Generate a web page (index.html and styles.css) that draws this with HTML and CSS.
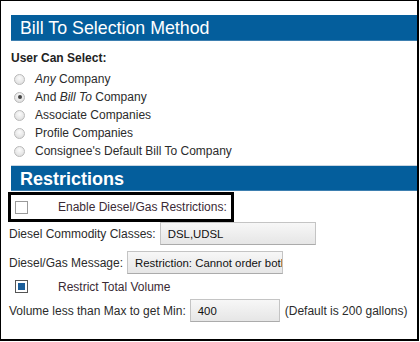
FILE: index.html
```html
<!DOCTYPE html>
<html lang="en">
<head>
  <meta charset="UTF-8" />
  <title>Bill To Selection Method</title>
  <link rel="stylesheet" href="styles.css">
</head>
<body>
  <div class="frame">
    <h2 class="section-bar">Bill To Selection Method</h2>
    <div class="select-title">User Can Select:</div>
    <ul class="options">
      <li><span class="radio"></span><em>Any</em>&nbsp;Company</li>
      <li><span class="radio checked"></span>And&nbsp;<em>Bill To</em>&nbsp;Company</li>
      <li><span class="radio"></span>Associate Companies</li>
      <li><span class="radio"></span>Profile Companies</li>
      <li><span class="radio"></span>Consignee's Default Bill To Company</li>
    </ul>

    <h2 class="section-bar bold">Restrictions</h2>
    <div class="highlight">
      <span class="check"></span>
      <span class="check-label">Enable Diesel/Gas Restrictions:</span>
    </div>
    <div class="field-row first">
      <label>Diesel Commodity Classes:</label>
      <div class="input wide">DSL,UDSL</div>
    </div>
    <div class="field-row">
      <label>Diesel/Gas Message:</label>
      <div class="input msg">Restriction: Cannot order both</div>
    </div>
    <div class="check-row">
      <span class="check on"></span>
      <span class="check-label">Restrict Total Volume</span>
    </div>
    <div class="field-row last">
      <label>Volume less than Max to get Min:</label>
      <div class="input small">400</div>
      <span class="note">(Default is 200 gallons)</span>
    </div>
  </div>
</body>
</html>
```
FILE: styles.css
```css
:root {
  --bar: #045e9c;
  --text: #2b2b2b;
}
html, body {
  margin: 0;
  padding: 0;
  background: #fff;
}
body {
  font-family: 'Liberation Sans', Arial, sans-serif;
  font-size: 12px;
  color: var(--text);
}

.frame {
  width: 419px;
  height: 341px;
  box-sizing: border-box;
  border: 1px solid #000;
  border-right-width: 2px;
  border-bottom-width: 2px;
  padding: 14px 0 0 10px;
  overflow: hidden;
}

/* Blue section bars */
.section-bar {
  margin: 0;
  height: 26px;
  line-height: 27px;
  padding-left: 9px;
  background: var(--bar);
  border-bottom: 1px solid #3d7fb0;
  box-sizing: border-box;
  color: #fff;
  font-size: 17.8px;
  font-weight: normal;
}
.section-bar.bold {
  margin-top: 5px;
  border-top: 1px solid #c9d6e2;
  font-weight: bold;
  font-size: 18px;
}

.select-title {
  margin-top: 10px;
  font-weight: bold;
  color: #222;
}

/* Radio list */
.options {
  list-style: none;
  margin: 5px 0 0;
  padding: 0;
}
.options li {
  display: flex;
  align-items: center;
  height: 18px;
}
.options em {
  font-style: italic;
}
.radio {
  width: 11px;
  height: 11px;
  border-radius: 50%;
  margin: 0 10px 0 3px;
  border: 1px solid #b9b9b9;
  background: radial-gradient(circle at 50% 35%, #fbfbfb, #d9d9d9);
  box-sizing: border-box;
  position: relative;
}
.radio.checked::after {
  content: '';
  position: absolute;
  left: 2.5px;
  top: 2.5px;
  width: 4px;
  height: 4px;
  border-radius: 50%;
  background: #444;
}

/* Checkboxes */
.highlight {
  display: flex;
  align-items: center;
  width: 226px;
  height: 30px;
  margin: 1px 0 0 -3px;
  border: 3px solid #000;
  box-sizing: border-box;
  padding-left: 4px;
}
.check {
  width: 13px;
  height: 13px;
  box-sizing: border-box;
  border: 1px solid #9a9a9a;
  background: #fff;
  position: relative;
  flex: none;
}
.check.on {
  border-color: #555;
}
.check.on::after {
  content: '';
  position: absolute;
  inset: 2px;
  background: #1b5e9a;
}
.check-label {
  margin-left: 30px;
  color: #3a2a35;
}
.check-row {
  display: flex;
  align-items: center;
  height: 13px;
  margin: 6px 0 0 4px;
}

/* Field rows */
.field-row {
  display: flex;
  align-items: center;
  margin: 6px 0 0 -2px;
  white-space: nowrap;
}
.field-row.first {
  margin-top: 0;
}
.field-row.last {
  margin-top: 6px;
}
.field-row label {
  margin-right: 4px;
}
.input {
  height: 23px;
  line-height: 22px;
  box-sizing: border-box;
  padding: 0 0 0 7px;
  border: 1px solid #c4c4c4;
  border-bottom-color: #ababab;
  background: linear-gradient(#f7f7f7, #e6e6e6);
  color: #111;
  font-size: 11.4px;
  overflow: hidden;
}
.input.wide { width: 156px; }
.input.msg { width: 156px; }
.input.small { width: 90px; }
.note {
  margin-left: 5px;
}
```
